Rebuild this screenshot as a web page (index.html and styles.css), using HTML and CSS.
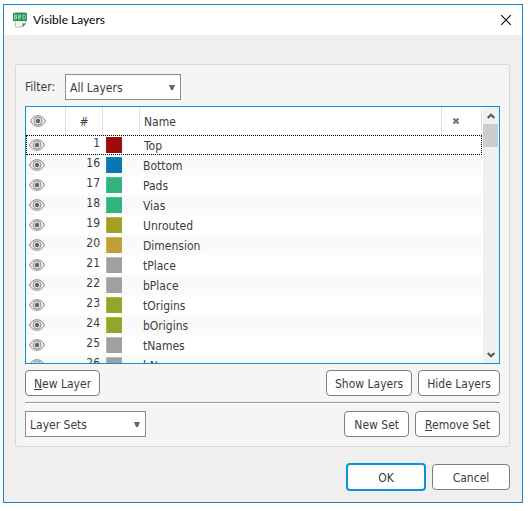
FILE: index.html
```html
<!DOCTYPE html>
<html lang="en">
<head>
<meta charset="utf-8">
<title>Visible Layers</title>
<link rel="stylesheet" href="styles.css">
</head>
<body>
<svg class="symbols" aria-hidden="true">
  <symbol id="eye" viewBox="0 0 16 12">
    <path d="M.5 6C2 2.600 4.800.7 8 .7s6 1.900 7.500 5.300C14 9.400 11.200 11.300 8 11.300S2 9.400.5 6z" fill="#eee" stroke="#858585"/>
    <circle cx="8" cy="6" r="4" fill="#e4e4e4" stroke="#929292"/>
    <circle cx="8" cy="6" r="2.200" fill="#636363"/>
  </symbol>
  <symbol id="down" viewBox="0 0 6 5"><path d="M0 0h6L4 5H2z" fill="#666"/></symbol>
</svg>
<main class="window">
  <header class="titlebar">
    <svg class="app-icon" viewBox="0 0 14 16" aria-hidden="true">
      <path d="M2.500.5h10v11l-3 3.500h-7z" fill="#f4f4f4" stroke="#bbb"/>
      <path d="M13 11.500H9.500V15z" fill="#666"/>
      <path d="M0 1h14v8H0z" fill="#209650"/>
      <path d="M1.500 3v4h2v-4zM1.500 5h2M5.500 7.500V3h2v2h-2M6.500 5l1 2.500M10 3v4h1.500l1-1v-2l-1-1z" fill="none" stroke="#b9e4c9" stroke-width=".8"/>
    </svg>
    <h1>Visible Layers</h1>
    <button class="close" type="button" aria-label="Close"><svg viewBox="0 0 10 10"><path d="M0 0l10 10M10 0L0 10" stroke="#111" stroke-width="1.200"/></svg></button>
  </header>
  <div class="content">
    <section class="group">
      <div class="row filter-row">
        <label for="filter">Filter:</label>
        <span class="combo combo-filter"><select id="filter"><option>All Layers</option></select><svg><use href="#down"/></svg></span>
      </div>
      <div class="list">
        <div class="viewport">
          <table>
            <colgroup><col class="c-eye"><col class="c-num"><col class="c-num"><col><col class="c-eye"></colgroup>
            <thead>
              <tr>
                <th aria-label="Visible"><svg class="eye"><use href="#eye"/></svg></th>
                <th class="num-head">#</th>
                <th aria-label="Color"></th>
                <th class="name">Name</th>
                <th class="used" aria-label="Used"><svg class="cross" viewBox="0 0 8 8"><path d="M1.500 1.500l5 5M6.500 1.500l-5 5" stroke="#777" stroke-width="2.200"/></svg></th>
              </tr>
            </thead>
            <tbody>
              <tr class="current"><td><svg class="eye"><use href="#eye"/></svg></td><td class="num">1</td><td><i class="swatch red"></i></td><td class="name">Top</td><td></td></tr>
              <tr><td><svg class="eye"><use href="#eye"/></svg></td><td class="num">16</td><td><i class="swatch blue"></i></td><td class="name">Bottom</td><td></td></tr>
              <tr><td><svg class="eye"><use href="#eye"/></svg></td><td class="num">17</td><td><i class="swatch green"></i></td><td class="name">Pads</td><td></td></tr>
              <tr><td><svg class="eye"><use href="#eye"/></svg></td><td class="num">18</td><td><i class="swatch green"></i></td><td class="name">Vias</td><td></td></tr>
              <tr><td><svg class="eye"><use href="#eye"/></svg></td><td class="num">19</td><td><i class="swatch olive"></i></td><td class="name">Unrouted</td><td></td></tr>
              <tr><td><svg class="eye"><use href="#eye"/></svg></td><td class="num">20</td><td><i class="swatch gold"></i></td><td class="name">Dimension</td><td></td></tr>
              <tr><td><svg class="eye"><use href="#eye"/></svg></td><td class="num">21</td><td><i class="swatch gray"></i></td><td class="name">tPlace</td><td></td></tr>
              <tr><td><svg class="eye"><use href="#eye"/></svg></td><td class="num">22</td><td><i class="swatch gray"></i></td><td class="name">bPlace</td><td></td></tr>
              <tr><td><svg class="eye"><use href="#eye"/></svg></td><td class="num">23</td><td><i class="swatch lime"></i></td><td class="name">tOrigins</td><td></td></tr>
              <tr><td><svg class="eye"><use href="#eye"/></svg></td><td class="num">24</td><td><i class="swatch lime"></i></td><td class="name">bOrigins</td><td></td></tr>
              <tr><td><svg class="eye"><use href="#eye"/></svg></td><td class="num">25</td><td><i class="swatch gray"></i></td><td class="name">tNames</td><td></td></tr>
              <tr><td><svg class="eye"><use href="#eye"/></svg></td><td class="num">26</td><td><i class="swatch gray"></i></td><td class="name">bNames</td><td></td></tr>
            </tbody>
          </table>
        </div>
        <div class="scrollbar">
          <button type="button" aria-label="Scroll up"><svg viewBox="0 0 8 6"><path d="M.7 5L4 1.700 7.300 5" fill="none" stroke="#555" stroke-width="2"/></svg></button>
          <div class="thumb"></div>
          <button class="scroll-down" type="button" aria-label="Scroll down"><svg viewBox="0 0 8 6"><path d="M.7 1L4 4.300 7.300 1" fill="none" stroke="#555" stroke-width="2"/></svg></button>
        </div>
      </div>
      <div class="row layer-row">
        <button class="btn" type="button"><u>N</u>ew Layer</button>
        <span class="space"></span>
        <button class="btn" type="button">Show Layers</button>
        <button class="btn" type="button">Hide Layers</button>
      </div>
      <hr>
      <div class="row set-row">
        <span class="combo combo-sets"><select aria-label="Layer Sets"><option>Layer Sets</option></select><svg><use href="#down"/></svg></span>
        <span class="space"></span>
        <button class="btn" type="button">New Set</button>
        <button class="btn" type="button"><u>R</u>emove Set</button>
      </div>
    </section>
    <footer class="actions">
      <button class="btn primary" type="button">OK</button>
      <button class="btn cancel" type="button">Cancel</button>
    </footer>
  </div>
</main>
</body>
</html>
```
FILE: styles.css
```css
* { box-sizing: border-box; }
body {
  margin: 0;
  height: 100vh;
  padding: 4px 8px 8px 3px;
  background: #fff;
  color: #3c3c3c;
  font: 12px/16px "DejaVu Sans Condensed", "DejaVu Sans", sans-serif;
}
button, select { font: inherit; color: inherit; margin: 0; }
svg { display: block; }
.symbols { display: none; }
.window {
  height: 100%;
  display: flex;
  flex-direction: column;
  border: 1px solid #1a80d0;
  background: #efefef;
}
.titlebar {
  display: flex;
  align-items: center;
  height: 30px;
  padding: 0 11px 0 9px;
  background: #fff;
  color: #000;
}
.app-icon { width: 14px; height: 16px; }
h1 {
  flex: 1;
  margin: 0 0 0 6px;
  font: 12px/16px Lato, sans-serif;
}
.close { padding: 0; border: 0; background: none; }
.close svg { width: 10px; height: 10px; }
.content {
  flex: 1;
  min-height: 0;
  display: flex;
  flex-direction: column;
  padding: 29px 12px 11px 11px;
}
.group {
  flex: 1;
  min-height: 0;
  display: flex;
  flex-direction: column;
  padding: 9px;
  border: 1px solid #d8d8d8;
  border-radius: 3px;
  background: #f5f5f5;
}
.row { display: flex; align-items: center; gap: 6px; }
.filter-row { margin-bottom: 6px; gap: 0; }
.filter-row label { width: 40px; }
.space { flex: 1; }
.combo { position: relative; }
.combo-filter { width: 116px; }
.combo-sets { width: 121px; }
.combo select {
  display: block;
  width: 100%;
  height: 26px;
  padding: 2px 4px 0;
  appearance: none;
  border: 1px solid #8c8c8c;
  border-radius: 0;
  background: #fff;
}
.combo svg {
  position: absolute;
  right: 6px;
  top: 11px;
  width: 6px;
  height: 5px;
  pointer-events: none;
}
.list {
  flex: 1;
  min-height: 0;
  display: flex;
  gap: 1px;
  border: 1px solid #0c93d4;
  background: #fff;
}
.viewport { flex: 1; overflow: hidden; }
table { width: 100%; table-layout: fixed; border-collapse: separate; border-spacing: 0; }
.c-eye { width: 40px; }
.c-num { width: 37px; }
th, td { padding: 0; font-weight: normal; text-align: left; vertical-align: middle; }
th { height: 28px; border-right: 1px solid #e2e2e2; }
td { height: 20px; line-height: 16px; }
tbody tr:nth-child(even) { background: #fafafa; }
.current { outline: 1px dotted #000; outline-offset: -1px; }
.eye { width: 16px; height: 12px; margin-left: 3px; }
th .eye { margin-left: 4px; }
th.num-head { padding-top: 2px; text-align: center; }
td.num { padding: 0 3px 4px 0; text-align: right; }
.name { padding: 2px 0 0 3px; }
th.name, .current .name { padding-left: 4px; }
.cross { width: 8px; height: 8px; margin-left: 10px; }
.swatch { display: block; width: 16px; height: 16px; margin-left: 3px; border: 1px solid; border-right-width: 0; border-bottom-width: 0; }
.red { background: #9e0b0b; border-color: #b80c0c; }
.blue { background: #0878ae; border-color: #0c8aca; }
.green { background: #33b27e; border-color: #38cc8e; }
.olive { background: #a0a029; border-color: #b8b82c; }
.gold { background: #bf9f38; border-color: #dab53e; }
.gray { background: #a0a0a0; border-color: #b8b8b8; }
.lime { background: #8fa72a; border-color: #a4c02d; }
.scrollbar {
  display: flex;
  flex-direction: column;
  width: 16px;
  padding-right: 1px;
  background: #f0f0f0;
}
.scrollbar button {
  display: flex;
  align-items: center;
  justify-content: center;
  height: 17px;
  padding: 0;
  border: 0;
  background: none;
}
.scrollbar svg { width: 8px; height: 6px; }
.thumb { height: 23px; background: #cdcdcd; }
.scroll-down { margin-top: auto; }
.layer-row { margin-top: 6px; }
hr { width: 100%; height: 2px; margin: 6px 0 7px; border: 0; border-top: 1px solid #999; background: #fff; }
.btn {
  height: 26px;
  padding: 2px 8px 0;
  border: 1px solid #7d7d7d;
  border-radius: 4px;
  background: #fff;
  white-space: nowrap;
}
.set-row .btn { padding: 2px 9px 0; }
.actions {
  display: flex;
  align-items: center;
  justify-content: flex-end;
  gap: 6px;
  margin-top: 16px;
}
.primary { width: 80px; height: 28px; border: 2px solid #0c93d4; }
.cancel { width: 78px; }
```
